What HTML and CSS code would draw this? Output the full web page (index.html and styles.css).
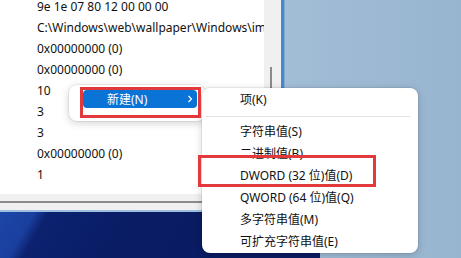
FILE: index.html
```html
<!DOCTYPE html>
<html lang="zh-CN">
<head>
<meta charset="utf-8">
<link rel="stylesheet" href="styles.css">
</head>
<body>
<div class="screen">
  <div class="desk-right"></div>
  <div class="wallpaper"></div>

  <div class="regwin">
    <div class="reg-main">
      <div class="reg-list">
        <div class="row first">9e 1e 07 80 12 00 00 00</div>
        <div class="row">C:\Windows\web\wallpaper\Windows\img0.jpg</div>
        <div class="row">0x00000000 (0)</div>
        <div class="row">0x00000000 (0)</div>
        <div class="row">10</div>
        <div class="row">3</div>
        <div class="row">3</div>
        <div class="row">0x00000000 (0)</div>
        <div class="row">1</div>
      </div>
      <div class="vscroll"><div class="vthumb"></div></div>
    </div>
    <div class="hscroll"><div class="hthumb"></div></div>
  </div>

  <div class="menu parent-menu">
    <div class="pitem active">
      <span>新建(N)</span>
      <svg class="chev" width="6" height="8" viewBox="0 0 6 8"><path d="M1.5 1 L4.5 4 L1.5 7" fill="none" stroke="#fff" stroke-width="1.2"/></svg>
    </div>
  </div>

  <div class="menu sub-menu">
    <div class="sitem">项(K)</div>
    <div class="sep"></div>
    <div class="sitem">字符串值(S)</div>
    <div class="sitem">二进制值(B)</div>
    <div class="sitem">DWORD (32 位)值(D)</div>
    <div class="sitem">QWORD (64 位)值(Q)</div>
    <div class="sitem">多字符串值(M)</div>
    <div class="sitem">可扩充字符串值(E)</div>
  </div>

  <div class="mark mark-new"></div>
  <div class="mark mark-dword"></div>
</div>
</body>
</html>
```

FILE: styles.css
```css
* { box-sizing: border-box; }
html, body { margin: 0; padding: 0; }
body {
  width: 461px;
  height: 258px;
  overflow: hidden;
  font-family: "Noto Sans", "Noto Sans CJK SC", sans-serif;
  font-size: 12px;
  color: #111;
}
.screen {
  position: relative;
  width: 461px;
  height: 258px;
  background: #9db9d3;
  overflow: hidden;
}
.desk-right {
  position: absolute;
  left: 282px; top: 0; right: 0; bottom: 0;
  background: linear-gradient(90deg, #a2bdd6 0%, #9cb8d2 60%, #98b5d0 100%);
}
.wallpaper {
  position: absolute;
  left: 0; top: 210px;
  width: 320px; height: 48px;
  border-top: 2px solid #9fbfe0;
  background:
    linear-gradient(120deg, #1c46a8 0%, #1a3f9e 10%, #0c2270 14%, #091c64 40%, #0a1c62 100%);
}
.regwin {
  position: absolute;
  left: 0; top: 0;
  width: 284px; height: 210px;
  display: flex;
  flex-direction: column;
  border-right: 3px solid #4a88cc;
  box-shadow: 1px 0 0 #7eaad6;
}
.reg-main {
  flex: 1;
  display: flex;
  min-height: 0;
}
.reg-list {
  flex: 1;
  background: #fff;
  padding-left: 37px;
  overflow: hidden;
  white-space: nowrap;
}
.reg-list .row {
  height: 21px;
  line-height: 21px;
}
.reg-list .row.first {
  height: 17px;
  line-height: 13px;
}
.vscroll {
  width: 17px;
  background: #f0f0f0;
  position: relative;
}
.vthumb {
  position: absolute;
  left: 6px; top: 67px;
  width: 2px; height: 22px;
  background: #8a8a8a;
}
.hscroll {
  height: 16px;
  background: #f0f0f0;
  padding-top: 7px;
}
.hthumb {
  height: 2px;
  width: 264px;
  background: #8a8a8a;
}
.menu {
  position: absolute;
  background: #fff;
  border-radius: 8px;
  box-shadow: 0 2px 8px rgba(0,0,0,0.18), 0 0 0 1px rgba(0,0,0,0.06);
}
.parent-menu {
  left: 69px; top: 85px;
  width: 136px; height: 36px;
  padding: 5px 8px 0 14px;
}
.pitem {
  height: 18px;
  display: flex;
  align-items: center;
  justify-content: space-between;
  padding: 0 4px 0 24px;
  border-radius: 4px;
  color: #fff;
}
.pitem.active { background: #0a74d6; }
.chev { display: block; }
.sub-menu {
  left: 202px; top: 88px;
  width: 216px; height: 165px;
  padding: 1px 0 0 38px;
}
.sitem {
  height: 22px;
  line-height: 22px;
  white-space: nowrap;
}
.sep {
  height: 10px;
  margin-left: -34px;
  margin-right: 8px;
  position: relative;
}
.sep::after {
  content: "";
  position: absolute;
  left: 0; right: 0; top: 5px;
  height: 1px;
  background: #e3e3e3;
}
.mark {
  position: absolute;
  border: 3px solid #e2393d;
}
.mark-new {
  left: 80px; top: 87px;
  width: 121px; height: 31px;
}
.mark-dword {
  left: 198px; top: 155px;
  width: 178px; height: 32px;
}
```
